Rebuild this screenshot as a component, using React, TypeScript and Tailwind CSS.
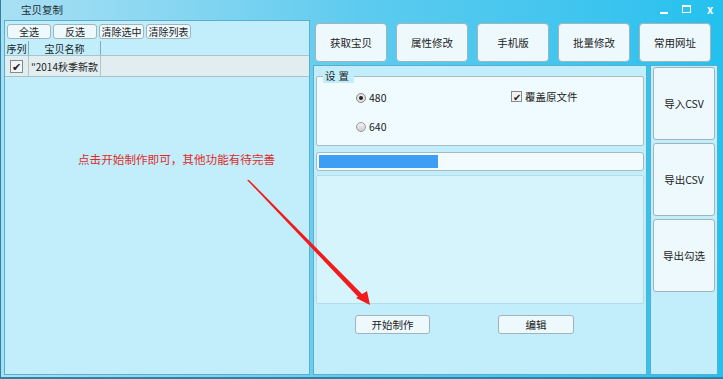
import React from "react";

const font = { fontFamily: '"Noto Sans CJK SC", "Noto Sans", sans-serif' };

function Btn({ label, className = "" }: { label: string; className?: string }) {
  return (
    <div
      className={`flex items-center justify-center whitespace-nowrap rounded-[3px] border border-[#9fb4bd] bg-[#eef9fd] text-[#222] ${className}`}
    >
      {label}
    </div>
  );
}

// ─── Left list panel ──────────────────────────────────────────────────────────
function ListPanel() {
  return (
    <div className="flex h-full w-[306px] flex-col border border-[#5aaecf] bg-[#c1eefa]">
      <div className="flex h-[18px] items-center gap-[2px] pl-[2px] pt-[2px] text-[10px]">
        <Btn label="全选" className="h-[15px] w-[44px]" />
        <Btn label="反选" className="h-[15px] w-[44px]" />
        <Btn label="清除选中" className="h-[15px] w-[45px]" />
        <Btn label="清除列表" className="h-[15px] w-[45px]" />
      </div>
      <div className="mt-[2px] flex h-[15px] whitespace-nowrap border-b border-[#a9c4cc] text-[10px] text-[#222]">
        <div className="flex w-[24px] items-center justify-center border-r border-[#8aa]">序列</div>
        <div className="flex w-[72px] items-center justify-center border-r border-[#8aa]">宝贝名称</div>
      </div>
      <div className="flex h-[21px] whitespace-nowrap border-b border-[#a9c0c6] bg-[#e2edf0] text-[10px] text-[#222]">
        <div className="flex w-[24px] items-center justify-center border-r border-[#b5c4c8]">
          <div className="flex h-[13px] w-[13px] items-center justify-center border border-[#7d8d94] bg-[#f4f4f4] text-[11px] leading-none">
            ✔
          </div>
        </div>
        <div className="flex w-[72px] items-center justify-center border-r border-[#b5c4c8]">"2014秋季新款</div>
      </div>
    </div>
  );
}

// ─── Middle work panel ────────────────────────────────────────────────────────
function WorkPanel() {
  return (
    <div className="flex h-full w-[334px] flex-col border border-[#5aaecf] bg-[#c1eefa] px-[2px] pt-[10px]">
      <div className="relative h-[70px] shrink-0 rounded-[2px] border border-[#a7bdc4] bg-[#effbfe] text-[10.5px] text-[#222]">
        <span className="absolute -top-[8px] left-[6px] bg-[#c1eefa] px-[2px] leading-[14px] tracking-[3px]">设置</span>
        <div className="absolute left-[39px] top-[13px] flex items-center gap-[3px]">
          <div className="flex h-[10px] w-[10px] items-center justify-center rounded-full border border-[#888] bg-[#e4e4e4]">
            <div className="h-[4px] w-[4px] rounded-full bg-[#222]" />
          </div>
          480
        </div>
        <div className="absolute left-[39px] top-[42px] flex items-center gap-[3px]">
          <div className="h-[10px] w-[10px] rounded-full border border-[#999] bg-gradient-to-b from-[#f2f2f2] to-[#cfcfcf]" />
          640
        </div>
        <div className="absolute left-[194px] top-[12px] flex items-center gap-[3px]">
          <div className="flex h-[11px] w-[11px] items-center justify-center border border-[#888] bg-[#f3f3f3] text-[10px] leading-none">
            ✔
          </div>
          覆盖原文件
        </div>
      </div>
      <div className="mt-[6px] h-[19px] shrink-0 rounded-[3px] border border-[#a7b8be] bg-[#f2fbfe] p-[2px]">
        <div className="h-full w-[119px] bg-[#3d9ef5]" />
      </div>
      <div className="mt-[4px] h-[129px] shrink-0 rounded-[2px] border border-[#b4dbe6] bg-[#d6f4fc]" />
      <div className="mt-[11px] flex text-[10.5px]">
        <Btn label="开始制作" className="ml-[39px] h-[19px] w-[75px]" />
        <Btn label="编辑" className="ml-[68px] h-[19px] w-[76px]" />
      </div>
    </div>
  );
}

// ─── Right side column ────────────────────────────────────────────────────────
function SideColumn() {
  return (
    <div className="flex h-full w-[68px] flex-col gap-[3px] border border-[#5aaecf] bg-[#c1eefa] px-[2px] pt-[1px] text-[10.5px]">
      <Btn label="导入CSV" className="h-[73px] w-full" />
      <Btn label="导出CSV" className="h-[73px] w-full" />
      <Btn label="导出勾选" className="h-[73px] w-full" />
    </div>
  );
}

export default function App() {
  return (
    <div
      style={font}
      className="relative h-[379px] w-[723px] overflow-hidden border-b-[2px] border-l border-[#2f7fa6] bg-gradient-to-r from-[#a8e0f3] via-[#5ccbef] to-[#22c1ee]"
    >
      {/* ── TITLE BAR ── */}
      <div className="flex h-[20px] items-center justify-between">
        <span className="ml-[20px] text-[10.5px] text-[#1d2c33]">宝贝复制</span>
        <div className="flex h-[18px] self-start text-[11px] text-white">
          <div className="flex w-[22px] items-end justify-center pb-[4px]">
            <div className="h-[2px] w-[8px] bg-white" />
          </div>
          <div className="flex w-[22px] items-center justify-center">
            <div className="h-[8px] w-[9px] border border-t-2 border-white" />
          </div>
          <div className="flex w-[26px] items-center justify-center font-bold">x</div>
        </div>
      </div>

      {/* ── BODY ── */}
      <div className="flex h-[355px] gap-[3px] pl-[3px]">
        <ListPanel />
        <div className="flex flex-col">
          <div className="flex h-[45px] gap-[9px] pl-[2px] pt-[3px] text-[10.5px]">
            {["获取宝贝", "属性修改", "手机版", "批量修改", "常用网址"].map((t) => (
              <Btn key={t} label={t} className="h-[39px] w-[72px] rounded-[4px]" />
            ))}
          </div>
          <div className="flex flex-1 gap-[3px]">
            <WorkPanel />
            <SideColumn />
          </div>
        </div>
      </div>

      {/* ── ANNOTATION ── */}
      <span className="absolute left-[77px] top-[151px] whitespace-nowrap text-[11.6px] text-[#e02a2a]">
        点击开始制作即可，其他功能有待完善
      </span>
      <svg className="absolute left-0 top-0" width="723" height="379">
        <polygon points="246,180 248,180 364,297 360,300" fill="#f21a1a" />
        <polygon points="355,298 369,305 366,291" fill="#f21a1a" />
      </svg>
    </div>
  );
}
